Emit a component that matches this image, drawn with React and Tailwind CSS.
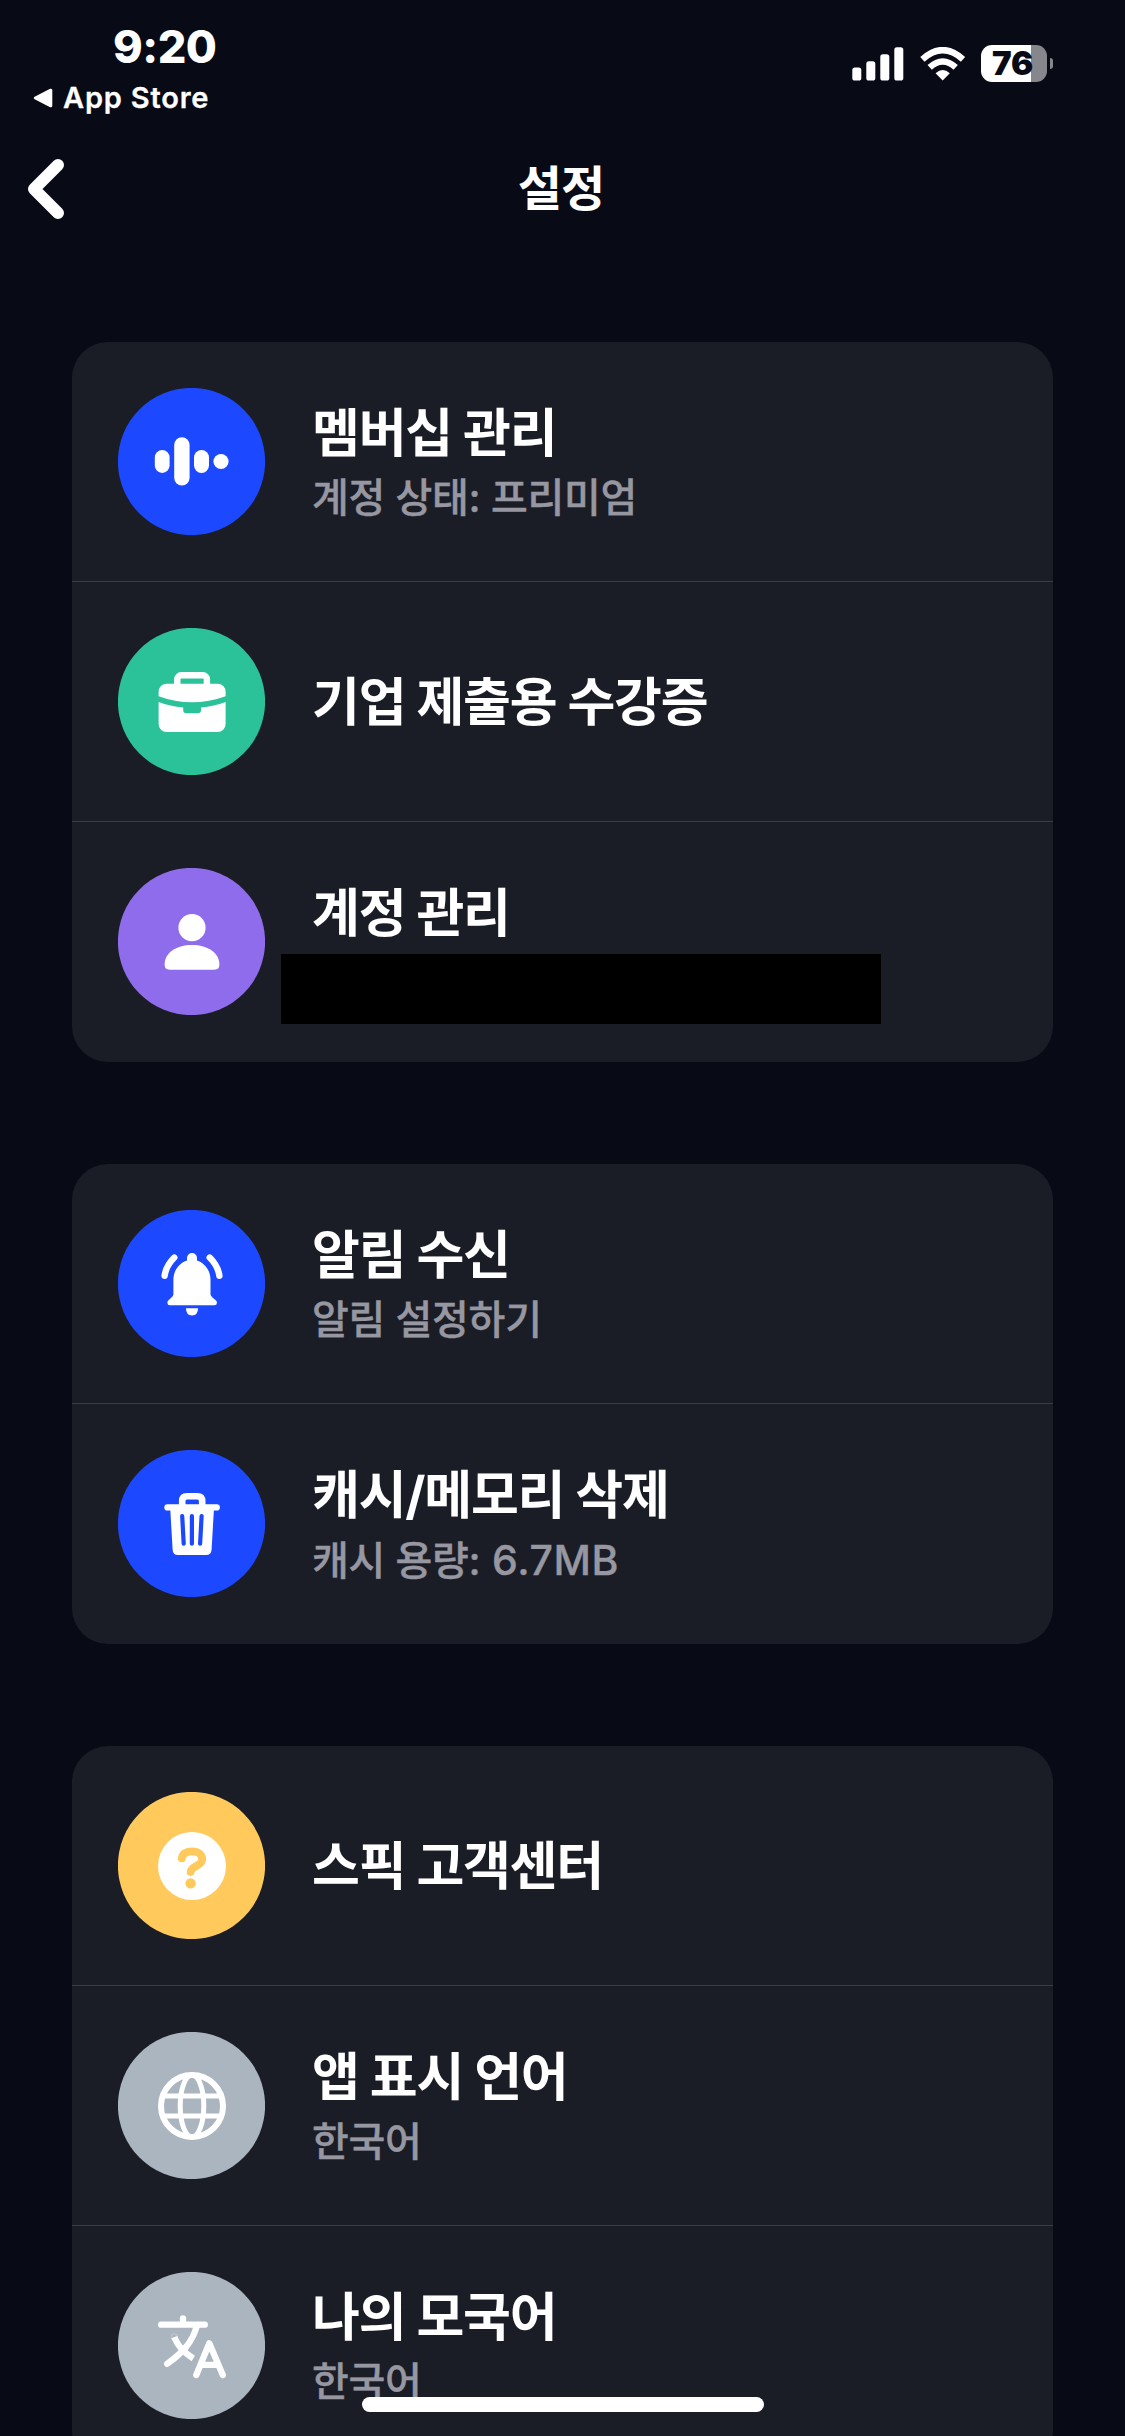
const ICONS = {
  wave: (
    <g fill="#fff">
      <rect x="36.8" y="62" width="14.8" height="23" rx="7.4" />
      <rect x="56.2" y="49.3" width="15.4" height="48.2" rx="7.7" />
      <rect x="76" y="62" width="15" height="23" rx="7.5" />
      <circle cx="103" cy="73.5" r="7.6" />
    </g>
  ),
  briefcase: (
    <g fill="#fff">
      <rect x="59.3" y="47.3" width="29.6" height="16" rx="4" fill="none" stroke="#fff" strokeWidth="6.4" />
      <path d="M48.6 55.7H99.6A8 8 0 0 1 107.6 63.7V68.2Q91 74.3 74 74.3T40.6 68.2V63.7A8 8 0 0 1 48.6 55.7Z" />
      <path d="M40.6 74Q52 78.3 65.2 79.4V82A3.3 3.3 0 0 0 68.5 85.3H79.7A3.3 3.3 0 0 0 83 82V79.4Q96 78.3 107.6 74V96A8 8 0 0 1 99.6 104H48.6A8 8 0 0 1 40.6 96Z" />
    </g>
  ),
  person: (
    <g fill="#fff">
      <circle cx="74" cy="59.7" r="13.6" />
      <path d="M46.6 96.5C46.6 85 58 77 74 77S101.4 85 101.4 96.5Q101.4 101.7 96.5 101.7H51.5Q46.6 101.7 46.6 96.5Z" />
    </g>
  ),
  bell: (
    <g fill="#fff">
      <path d="M69 48A5 5 0 0 1 79 48V50.4C87 53 92.5 60.5 92.5 70V84.5Q93 86.3 95 88L97.8 90.3Q99 91.3 98.9 93Q98.8 95.3 96.5 95.3H51.8Q49.5 95.3 49.4 93Q49.3 91.3 50.5 90.3L53 88Q55.2 86.3 55.4 84.5V70C55.4 60.5 61 53 69 50.4Z" />
      <path d="M68 98.2H80Q80 105.4 74 105.4T68 98.2Z" />
      <path d="M56.3 47.6Q48 56 46.6 65.8M91.7 47.6Q100 56 101.4 65.8" fill="none" stroke="#fff" strokeWidth="6.4" strokeLinecap="round" />
    </g>
  ),
  trash: (
    <g>
      <path d="M64.2 57V51Q64.2 46.2 69 46.2H79.4Q84.2 46.2 84.2 51V57" fill="none" stroke="#fff" strokeWidth="6.6" />
      <rect x="46.3" y="54.3" width="55.6" height="6.2" rx="3.1" fill="#fff" />
      <path d="M52.2 58H96L93.6 99.5Q93.3 105 88 105H60Q54.9 105 54.6 99.5Z" fill="#fff" />
      <path d="M64.2 66L65.7 93.7M73.9 66V93.7M83.6 66L82.1 93.7" fill="none" stroke="#1c49ff" strokeWidth="4.2" strokeLinecap="round" />
    </g>
  ),
  help: (
    <g>
      <circle cx="74" cy="74" r="34" fill="#fff" />
      <path d="M63.8 66.3C64.3 61.5 68.5 59.3 74 59.3C80.3 59.3 84.2 62.6 84.2 67.2C84.2 74.2 73.2 73.6 72.6 80" fill="none" stroke="#ffca5b" strokeWidth="7.8" strokeLinecap="round" />
      <circle cx="72.6" cy="91.4" r="5.2" fill="#ffca5b" />
    </g>
  ),
  globe: (
    <g fill="none" stroke="#fff">
      <circle cx="74" cy="74" r="31" strokeWidth="6" />
      <ellipse cx="74" cy="74" rx="11.8" ry="31" strokeWidth="5" />
      <path d="M45 64H103M45 84H103" strokeWidth="5" />
    </g>
  ),
  translate: (
    <g fill="none" stroke="#fff" strokeWidth="6.3" strokeLinecap="round" strokeLinejoin="round">
      <path d="M43.2 52.7H86.8M65 46.3V52" />
      <path d="M78.5 55C74 71 64 81 49.2 91.8" />
      <path d="M56.3 65.2C59.5 73.5 65.5 80.5 75.3 86.5" strokeLinecap="butt" />
      <circle cx="56.3" cy="65" r="0.1" />
      <path d="M78.3 103L91.3 71.3L104.8 103M82.5 92.8H100" />
    </g>
  ),
};

const GROUPS = [
  [
    { icon: "wave", color: "#1c49ff", title: "멤버십 관리", sub: "계정 상태: 프리미엄" },
    { icon: "briefcase", color: "#2bc199", title: "기업 제출용 수강증" },
    { icon: "person", color: "#8f6cec", title: "계정 관리", redacted: true },
  ],
  [
    { icon: "bell", color: "#1c49ff", title: "알림 수신", sub: "알림 설정하기" },
    { icon: "trash", color: "#1c49ff", title: "캐시/메모리 삭제", sub: "캐시 용량:", amount: "6.7MB" },
  ],
  [
    { icon: "help", color: "#ffca5b", title: "스픽 고객센터" },
    { icon: "globe", color: "#aab5bf", title: "앱 표시 언어", sub: "한국어" },
    { icon: "translate", color: "#aab5bf", title: "나의 모국어", sub: "한국어" },
  ],
];

function Row({ item, last }) {
  return (
    <div
      className={
        "relative flex h-[240px] shrink-0 items-start pt-[46px] pl-[46px] " +
        (last ? "" : "border-b border-[#3a3c44]")
      }
    >
      <svg width="147" height="147" viewBox="0 0 147 147" className="shrink-0">
        <circle cx="73.5" cy="73.5" r="73.6" fill={item.color} />
        {ICONS[item.icon]}
      </svg>
      <div
        className={
          "ml-[47px] flex h-[147px] flex-col justify-center whitespace-nowrap " +
          (item.sub || item.redacted ? "pt-[9px]" : "pt-[3px]")
        }
      >
        <div className="text-[52px] leading-[64px] font-bold tracking-[-1.2px] text-white">{item.title}</div>
        {item.sub && (
          <div className="text-[40px] leading-[64px] font-medium tracking-[-0.25px] text-[#9797a1] [-webkit-text-stroke:0.4px_#9797a1]">
            {item.sub}
            {item.amount && <span className="text-[41px] tracking-[0.6px]"> {item.amount}</span>}
          </div>
        )}
        {item.redacted && <div className="h-[64px]" />}
      </div>
      {item.redacted && <div className="absolute top-[132px] left-[209px] h-[70px] w-[600px] bg-black" />}
    </div>
  );
}

function StatusBar() {
  return (
    <div className="flex h-[132px] shrink-0 justify-between">
      <div className="flex flex-col pt-[20px] pl-[33px]">
        <div className="pl-[80px] text-[45px] leading-[54px] font-extrabold tracking-[-0.5px] text-white">9:20</div>
        <div className="mt-[6px] flex items-center">
          <svg width="20" height="20" viewBox="0 0 20 20">
            <path d="M2.3 10L17.8 2.2V17.8Z" fill="#fff" stroke="#fff" strokeWidth="3" strokeLinejoin="round" />
          </svg>
          <span className="ml-[10px] text-[29px] leading-[36px] font-semibold tracking-[0.8px] text-white [-webkit-text-stroke:0.3px_#fff]">App Store</span>
        </div>
      </div>
      <div className="mt-[45px] mr-[72px] flex h-[37px] items-center">
        <svg width="52" height="34" viewBox="0 0 52 34" fill="#fff">
          <rect x="0.3" y="20.5" width="9" height="13" rx="2.6" />
          <rect x="14.3" y="14.3" width="9" height="19.2" rx="2.6" />
          <rect x="28.3" y="7.3" width="9" height="26.2" rx="2.6" />
          <rect x="42.3" y="0.3" width="9" height="33.2" rx="2.6" />
        </svg>
        <svg width="46" height="34" viewBox="0 0 46 34" className="ml-[16px]">
          <path d="M2.4 12.3Q22.7 -6 43 12.3" fill="none" stroke="#fff" strokeWidth="6.4" />
          <path d="M9.7 20.4Q22.7 8.6 35.7 20.4" fill="none" stroke="#fff" strokeWidth="6.4" />
          <path d="M15.6 26.2Q22.7 20 29.8 26.2L22.7 33.4Z" fill="#fff" />
        </svg>
        <div className="ml-[15px] flex h-[37px] w-[66px] items-center justify-center rounded-[11px] bg-[linear-gradient(90deg,#fff_50px,#86878c_50px)]">
          <span className="pr-[3px] text-[33px] leading-[37px] font-black tracking-[-0.2px] text-[#080a16]">76</span>
        </div>
        <div className="ml-[3px] h-[11px] w-[3px] rounded-r-full bg-[#86878c]" />
      </div>
    </div>
  );
}

export default function App() {
  return (
    <div className="relative flex h-[2436px] w-[1125px] flex-col overflow-hidden bg-[#080a16] font-['Inter','Noto_Sans_CJK_KR',sans-serif]">
      <StatusBar />
      <header className="grid h-[114px] shrink-0 grid-cols-3 items-center">
        <svg width="44" height="66" viewBox="0 0 44 66" className="ml-[24px]">
          <path d="M34 9L10 33L34 57" fill="none" stroke="#fff" strokeWidth="12" strokeLinecap="round" strokeLinejoin="round" />
        </svg>
        <h1 className="pr-[3px] text-center text-[48px] leading-[60px] font-bold tracking-[-1px] text-white">설정</h1>
      </header>
      <main className="mt-[96px] flex flex-col gap-[102px] px-[72px]">
        {GROUPS.map((group, i) => (
          <section key={i} className="flex flex-col overflow-hidden rounded-[36px] bg-[#1b1d26]">
            {group.map((item, j) => (
              <Row key={item.title} item={item} last={j === group.length - 1} />
            ))}
          </section>
        ))}
      </main>
      <div className="absolute top-[2397px] left-[362px] h-[15px] w-[402px] rounded-full bg-white" />
    </div>
  );
}
